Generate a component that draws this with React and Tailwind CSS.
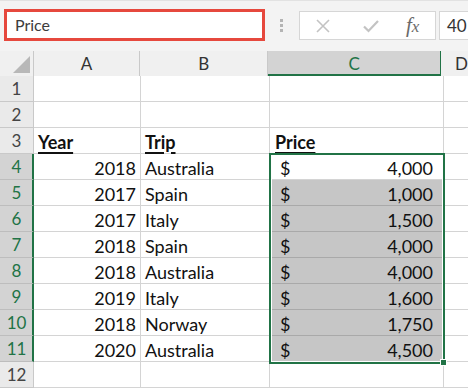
import React from 'react';

const rows = [
  { n: 1 },
  { n: 2 },
  { n: 3, a: 'Year', b: 'Trip', c: 'Price', head: true },
  { n: 4, a: '2018', b: 'Australia', price: '4,000', active: true },
  { n: 5, a: '2017', b: 'Spain', price: '1,000' },
  { n: 6, a: '2017', b: 'Italy', price: '1,500' },
  { n: 7, a: '2018', b: 'Spain', price: '4,000' },
  { n: 8, a: '2018', b: 'Australia', price: '4,000' },
  { n: 9, a: '2019', b: 'Italy', price: '1,600' },
  { n: 10, a: '2018', b: 'Norway', price: '1,750' },
  { n: 11, a: '2020', b: 'Australia', price: '4,500' },
  { n: 12 },
];

const Toolbar = () => (
  <div className="flex h-[51px] items-start bg-[#f3f3f3] border-t border-[#e2e2e2]">
    <div className="ml-[4px] mt-[8px] flex h-[32px] w-[261px] items-center border-[3px] border-[#e6483d] bg-white pl-[8px] text-[16px] text-[#3c3c3c]">
      Price
    </div>
    <div className="ml-[15px] mt-[18px] flex flex-col gap-[2px]">
      <span className="h-[3px] w-[3px] bg-[#b4b4b4]"></span>
      <span className="h-[3px] w-[3px] bg-[#b4b4b4]"></span>
      <span className="h-[3px] w-[3px] bg-[#b4b4b4]"></span>
    </div>
    <div className="ml-[16px] mt-[10px] flex h-[29px] w-[137px] items-center border border-[#d6d6d6] bg-white">
      <svg className="ml-[16px]" width="14" height="14" viewBox="0 0 14 14">
        <path d="M1 1 L13 13 M13 1 L1 13" stroke="#c3c3c3" strokeWidth="1.6" fill="none" />
      </svg>
      <svg className="ml-[33px]" width="16" height="14" viewBox="0 0 16 14">
        <path d="M1 7.5 L5.5 12 L15 2" stroke="#c3c3c3" strokeWidth="2.2" fill="none" />
      </svg>
      <span className="ml-[27px] font-['Liberation_Serif',serif] text-[21px] italic leading-none text-[#6a6a6a]">
        f<span className="text-[17px]">x</span>
      </span>
    </div>
    <div className="ml-[3px] mt-[10px] flex h-[29px] flex-1 items-center border border-r-0 border-[#d6d6d6] bg-white pl-[7px] text-[17px] text-[#333]">
      40
    </div>
  </div>
);

const ColHeader = () => (
  <div className="flex h-[25px] bg-[#f0f0f0] text-[17px] text-[#333]">
    <div className="relative w-[34px] border-r border-[#c9c9c9]">
      <div className="absolute bottom-[3px] right-[3px] h-0 w-0 border-b-[17px] border-l-[17px] border-b-[#b8b8b8] border-l-transparent"></div>
    </div>
    <div className="flex w-[107px] items-center justify-center border-r border-[#c9c9c9]">A</div>
    <div className="flex w-[129px] items-center justify-center border-r border-[#c9c9c9]">B</div>
    <div className="flex w-[174px] items-center justify-center border-b-2 border-r border-[#217346] bg-[#d3d3d3] pt-[2px] text-[#217346]">C</div>
    <div className="flex flex-1 items-center pl-[14px]">D</div>
  </div>
);

const Head = ({ children }) => (
  <span className="font-bold underline decoration-[1.5px] underline-offset-[3px]">{children}</span>
);

const Row = ({ r }) => {
  const sel = r.n >= 4 && r.n <= 11;
  const cFill = sel && !r.active;
  return (
    <div className="flex h-[26px] text-[18px] text-[#111]">
      <div
        className={
          sel
            ? 'flex w-[34px] items-center justify-center border-b border-r-2 border-b-[#bdbdbd] border-r-[#217346] bg-[#d3d3d3] pl-[1px] pt-[1px] text-[17px] text-[#217346]'
            : 'flex w-[34px] items-center justify-center border-b border-r border-[#c9c9c9] bg-[#eaeaea] pt-[1px] text-[17px] text-[#444]'
        }
      >
        {r.n}
      </div>
      <div
        className={
          'flex w-[107px] items-center border-b border-r border-[#d4d4d4] pt-[3px] ' +
          (r.head ? 'justify-start pl-[4px]' : 'justify-end pr-[4px]')
        }
      >
        {r.head ? <Head>{r.a}</Head> : r.a}
      </div>
      <div className="flex w-[129px] items-center justify-start border-b border-r border-[#d4d4d4] pl-[4px] pt-[3px]">
        {r.head ? <Head>{r.b}</Head> : r.b}
      </div>
      <div
        className={
          'flex w-[174px] items-center justify-between border-b border-r pl-[10px] pr-[10px] pt-[3px] ' +
          (cFill ? 'border-[#a9a9a9] bg-[#c6c6c6]' : 'border-[#d4d4d4] bg-white')
        }
      >
        {r.head ? (
          <span className="-ml-[5px]">
            <Head>{r.c}</Head>
          </span>
        ) : r.price ? (
          <>
            <span>$</span>
            <span>{r.price}</span>
          </>
        ) : null}
      </div>
      <div className="flex-1 border-b border-[#d4d4d4]"></div>
    </div>
  );
};

export default function App() {
  return (
    <div className="h-[388px] w-[468px] overflow-hidden bg-white font-['Lato',sans-serif]">
      <Toolbar />
      <div className="relative">
        <ColHeader />
        {rows.map((r) => (
          <Row key={r.n} r={r} />
        ))}
        {/* selection outline over C4:C11 */}
        <div className="pointer-events-none absolute left-[269px] top-[102px] h-[211px] w-[176px] border-2 border-[#217346]">
          <div className="h-full w-full border border-white"></div>
          <div className="absolute -bottom-[4px] -right-[4px] h-[7px] w-[7px] border border-white bg-[#217346]"></div>
        </div>
      </div>
    </div>
  );
}
